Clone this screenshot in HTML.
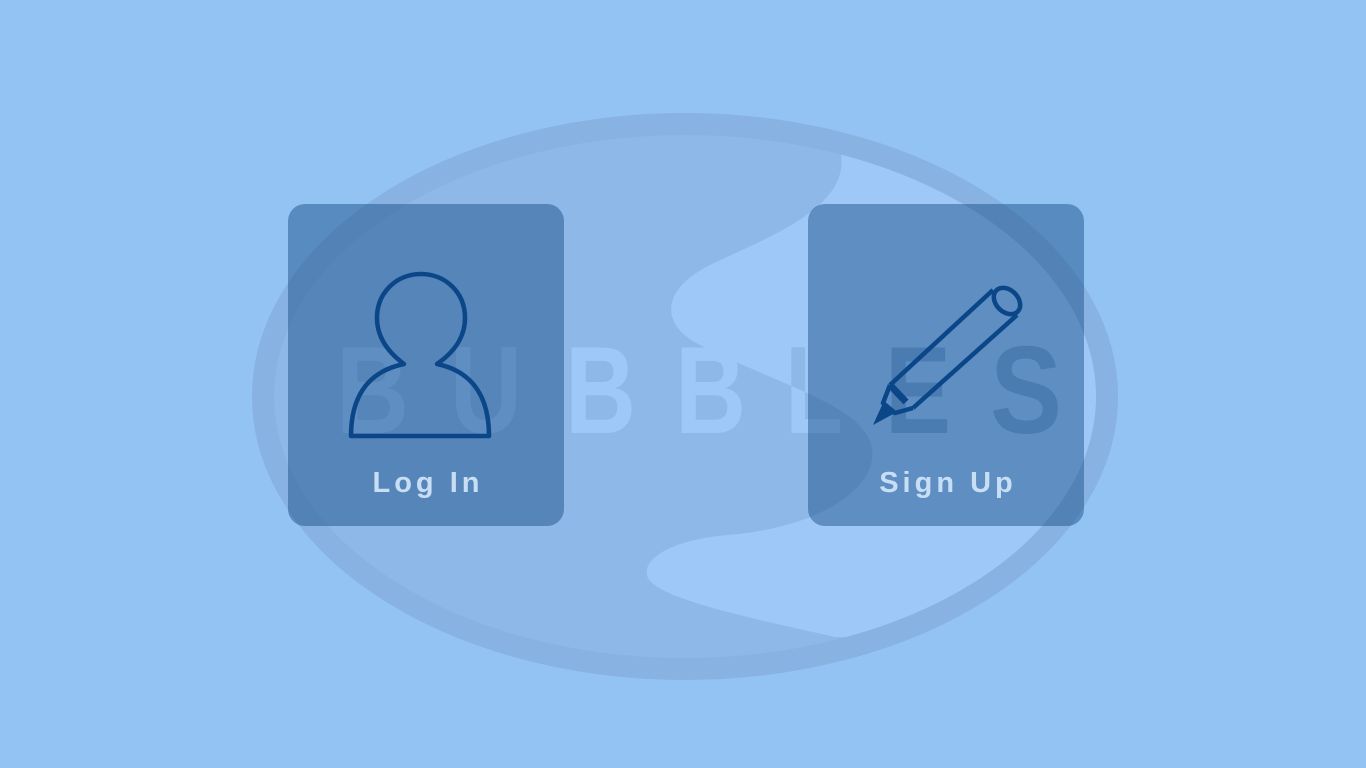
<!DOCTYPE html>
<html><head><meta charset="utf-8"><style>
html,body{margin:0;padding:0;background:#92c3f3;}
svg{display:block}
</style></head><body>
<svg width="1366" height="768" viewBox="0 0 1366 768" xmlns="http://www.w3.org/2000/svg">
<defs>
<clipPath id="inner"><ellipse cx="685" cy="396.5" rx="411" ry="261.5"/></clipPath>
<clipPath id="light"><path d="M841,154 C850,210 760,240 710,265 C660,290 660,325 700,345 C790,390 880,410 872,460 C865,500 800,530 727,535 C670,540 640,560 648,578 C660,600 760,620 835,637 L1200,640 L1200,120 Z"/></clipPath>
</defs>
<rect width="1366" height="768" fill="#92c3f3"/>
<ellipse cx="685" cy="396.5" rx="422" ry="272.5" fill="#8db8e8" stroke="#87b2e2" stroke-width="22"/>
<g clip-path="url(#inner)">
<path d="M841,154 C850,210 760,240 710,265 C660,290 660,325 700,345 C790,390 880,410 872,460 C865,500 800,530 727,535 C670,540 640,560 648,578 C660,600 760,620 835,637 L1200,640 L1200,120 Z" fill="#9dc8f7"/>
</g>
<g font-family="'Liberation Sans',sans-serif" font-weight="bold" font-size="124">
<g fill="#9dc8f7">
<text x="336" y="433" textLength="73" lengthAdjust="spacingAndGlyphs">B</text>
<text x="450" y="433" textLength="72" lengthAdjust="spacingAndGlyphs">U</text>
<text x="565" y="433" textLength="71" lengthAdjust="spacingAndGlyphs">B</text>
<text x="675" y="433" textLength="71" lengthAdjust="spacingAndGlyphs">B</text>
<text x="785" y="433" textLength="58" lengthAdjust="spacingAndGlyphs">L</text>
</g>
<g fill="#8db8e8" clip-path="url(#light)">
<text x="785" y="433" textLength="58" lengthAdjust="spacingAndGlyphs">L</text>
</g>
<g fill="#7aa6d8">
<text x="885" y="433" textLength="66" lengthAdjust="spacingAndGlyphs">E</text>
<text x="990" y="433" textLength="72" lengthAdjust="spacingAndGlyphs">S</text>
</g>
</g>
<rect x="288" y="204" width="276" height="322" rx="17" fill="rgb(20,75,130)" fill-opacity="0.46"/>
<rect x="808" y="204" width="276" height="322" rx="17" fill="rgb(20,75,130)" fill-opacity="0.46"/>
<g fill="none" stroke="#0a4688" stroke-width="4.5" stroke-linejoin="round">
<path d="M404,364 C385,350 377,335 377,318 C377,292 397,274 421,274 C445,274 465,292 465,318 C465,335 457,350 437,364 C475,372 489,400 489,436 L351,436 C351,400 365,372 404,364 Z"/>
<path d="M993,290 L890,385 M1017,315 L913,408"/>
<ellipse cx="1007" cy="301" rx="15" ry="11" transform="rotate(45 1007 301)"/>
<path d="M890,385 L883,403 L895,413 L913,408"/>
<path d="M890,385 L906,402" stroke-width="7"/>
</g>
<path d="M873,425 L883,403 L895,413 Z" fill="#0a4688"/>
<g font-family="'Liberation Sans',sans-serif" font-weight="bold" font-size="29" fill="#c8def5" letter-spacing="4" text-anchor="middle">
<text x="428" y="492">Log In</text>
<text x="948" y="492">Sign Up</text>
</g>
</svg>
</body></html>
